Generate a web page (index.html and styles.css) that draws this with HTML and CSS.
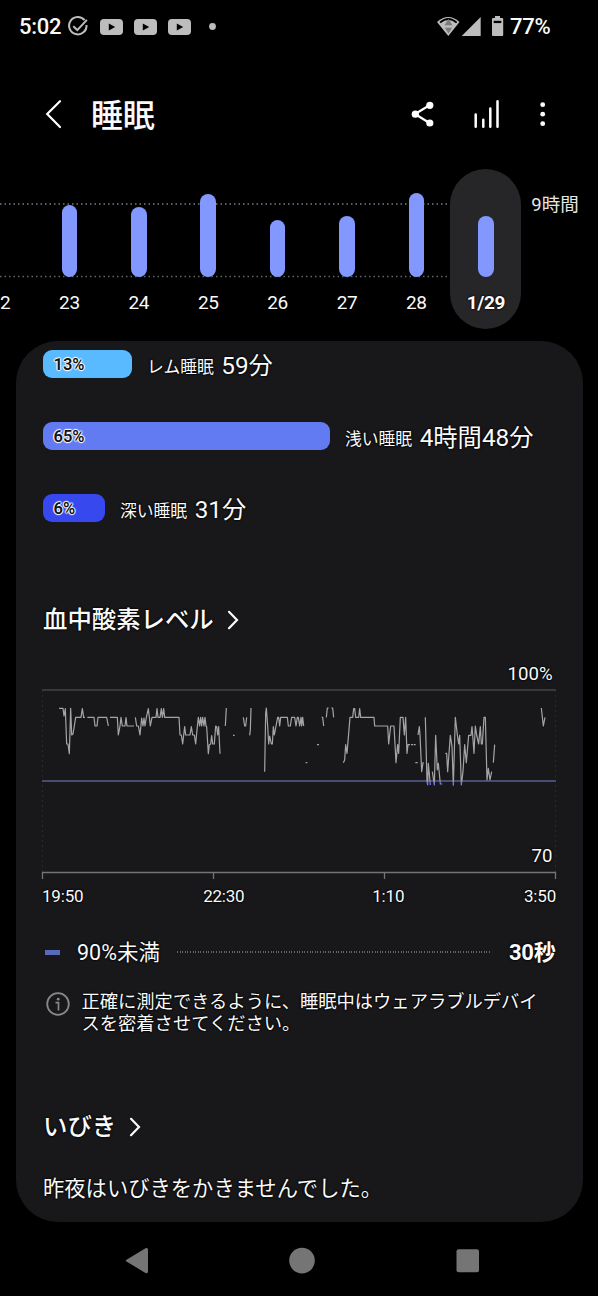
FILE: index.html
```html
<!DOCTYPE html>
<html lang="ja">
<head>
<meta charset="utf-8">
<title>睡眠</title>
<link rel="stylesheet" href="styles.css">
</head>
<body>
<div class="screen">
  <div class="status">
    <span class="clock">5:02</span>
    <svg class="status-left" width="160" height="24" viewBox="66 15 160 24">
      <g fill="none" stroke="#bdbdbd" stroke-width="2">
        <path d="M84.6 20.2A8.7 8.7 0 1 0 86.5 25"/>
        <path d="M73.3 26.3l4 3.8 9.6-10.2"/>
      </g>
      <g fill="#bdbdbd">
        <rect x="100" y="19" width="23" height="16" rx="4"/>
        <rect x="134" y="19" width="23" height="16" rx="4"/>
        <rect x="168" y="19" width="23" height="16" rx="4"/>
        <circle cx="212.5" cy="26.5" r="3.4"/>
      </g>
      <path fill="#000" d="M108.8 23.4v7l6.4-3.5zM142.8 23.4v7l6.4-3.5zM176.8 23.4v7l6.4-3.5z"/>
    </svg>
    <svg class="status-right" width="70" height="24" viewBox="435 15 70 24">
      <path fill="#bdbdbd" d="M437 22Q448.300 12 459.500 22L448.300 36z"/>
      <path fill="none" stroke="#000" stroke-width="1.800" d="M440 22.600Q448.300 15.500 456.700 22.600"/>
      <path fill="#7c7c7c" d="M448.500 19l4 6.300h-8zM448.500 33.500l-3.600-5.800h7.200z"/>
      <path fill="#bdbdbd" d="M480.700 17v19H461.700z"/>
      <path fill="#bdbdbd" d="M495 16h5v2h2.200q1 0 1 1v16q0 1-1 1H493q-1 0-1-1V19q0-1 1-1h2z"/>
      <path fill="#000" d="M493.700 20.800h7.600v2.300h-7.600z"/>
    </svg>
    <span class="battery">77%</span>
  </div>

  <div class="appbar">
    <svg class="back" width="18" height="30" viewBox="45 99 18 30"><path d="M60 101.200L47.200 114 60 127" fill="none" stroke="#fff" stroke-width="2.200" stroke-linecap="round"/></svg>
    <h1 class="title">睡眠</h1>
    <svg class="actions" width="140" height="34" viewBox="410 97 140 34" fill="#fff">
      <path d="M429.500 105.300L415 114l14.500 9" fill="none" stroke="#fff" stroke-width="2.200"/>
      <circle cx="429.800" cy="105.300" r="3.600"/><circle cx="415.300" cy="114.200" r="3.600"/><circle cx="429.800" cy="123" r="3.600"/>
      <path d="M475.700 114.500v12.200M483.300 119.800v6.900M490.300 108.500v18.200M497.500 101.200v25.500" stroke="#fff" stroke-width="2.500" stroke-linecap="round"/>
      <circle cx="542.700" cy="104.700" r="2.400"/><circle cx="542.700" cy="114.200" r="2.400"/><circle cx="542.700" cy="123.700" r="2.400"/>
    </svg>
  </div>

  <div class="week">
    <svg class="guides" width="450" height="160" viewBox="0 169 450 160">
      <path d="M0 204H450" stroke="#77798e" stroke-width="1.600" stroke-dasharray="1.500 3"/>
      <path d="M0 276.500H450" stroke="#66666a" stroke-width="1.300" stroke-dasharray="1.500 3"/>
    </svg>
    <div class="days">
      <div class="day"><span class="date">22</span></div>
      <div class="day"><i class="bar" style="height:71.500px"></i><span class="date">23</span></div>
      <div class="day"><i class="bar" style="height:69.500px"></i><span class="date">24</span></div>
      <div class="day"><i class="bar" style="height:82.500px"></i><span class="date">25</span></div>
      <div class="day"><i class="bar" style="height:57px"></i><span class="date">26</span></div>
      <div class="day"><i class="bar" style="height:60.500px"></i><span class="date">27</span></div>
      <div class="day"><i class="bar" style="height:83.500px"></i><span class="date">28</span></div>
      <div class="day selected"><i class="bar" style="height:61px"></i><span class="date">1/29</span></div>
    </div>
    <span class="goal">9時間</span>
  </div>

  <main class="card">
    <div class="stage"><span class="share rem">13%</span><span class="name">レム睡眠</span><span class="time">59分</span></div>
    <div class="stage"><span class="share light">65%</span><span class="name">浅い睡眠</span><span class="time">4時間48分</span></div>
    <div class="stage"><span class="share deep">6%</span><span class="name">深い睡眠</span><span class="time">31分</span></div>

    <h2 class="heading oxygen">血中酸素レベル<svg class="chevron" width="12" height="20" viewBox="0 0 12 20"><path d="M2 1.800L10 10 2 18.200"/></svg></h2>
    <div class="plot">
      <div class="max">100%</div>
      <svg class="trace" width="516" height="196" viewBox="41 686 516 196">
        <defs>
          <linearGradient id="below" gradientUnits="userSpaceOnUse" x1="0" y1="0" x2="0" y2="400">
            <stop offset=".757" stop-color="#a4a4a4"/><stop offset=".757" stop-color="#7280ed"/>
          </linearGradient>
        </defs>
        <path d="M42.500 690V872M555.500 690V872" stroke="#29292b" stroke-dasharray="2 3"/>
        <path d="M42 690H556" stroke="#38383a" stroke-width="2"/>
        <path d="M42 781H556" stroke="#484b73" stroke-width="2"/>
        <path d="M42.500 879V872.500H555.500V879M213.500 872v7M384.500 872v7" fill="none" stroke="#747476" stroke-width="1.300"/>
        <g fill="none" stroke="url(#below)" stroke-width="3.600" stroke-linejoin="round">
          <path transform="translate(30 680) scale(.33333)" d="M87 85H99L102 108 106 86 110 192H114L118 221 122 85 125 165 129 162 133 138 137 112H153L157 86 161 112H165M172 112H192L195 138H201L204 112H230L235 138M240 112H262L265 165 270 138 273 112 277 138H285L288 113 291 138H312M316 112L320 138H325L330 165 335 114 339 138 342 114 345 138 349 112 355 86 361 138 366 112H378L381 86 384 112H390L394 86 397 112 401 86 404 112H447L450 165H454L458 192 464 140 467 165H480L484 140 488 165H493L497 192 502 140 505 112 509 138 512 112 515 138 518 112 522 138 525 112 528 138"/>
          <path transform="translate(200 680) scale(.33333)" d="M17 138L20 140 25 221 28 194 32 192 35 167 38 192H43L47 138 50 140 53 165 56 140 60 221M76 138L79 84M99 166h5M130 112L134 138H137L140 112M149 166L151 150 153 84M194 275L197 100 199 84 203 138 206 192 209 168 214 192H217L220 140 223 165 228 138 233 112H236L239 138 242 112H262L265 138H271L275 112H284L288 138 292 112H295L299 138 303 112 305 138 308 112 311 138M317 248h5M351 194h6M365 112H368L371 138M379 112L382 84H386M394 84H398L401 112"/>
          <path transform="translate(330 680) scale(.33333)" d="M40 248L44 240 47 194 51 220 60 112H68L71 86H74L77 112H86L89 86 92 112H132L134 138H173L176 192 182 138H192L198 248 203 194 206 220 211 112H219L223 165 227 112 231 220 234 194H240M243 194h6M251 194h6M256 248h7M264 165L268 140 270 165 275 275 279 248 281 250M286 112L291 305 293 315 295 250 301 315M307 275L313 315 317 166 322 270 325 250 331 312H337M346 220H350L353 275 361 166 366 200 370 316 376 112 382 165 386 192 389 166 394 315 399 275 404 194 409 248 416 166H423L426 140 428 165 432 220 436 138 440 165 446 192 451 140 454 192H457L462 112H466L471 300 475 265 480 300 485 275M490 248L494 194M634 84L640 138 645 112"/>
        </g>
      </svg>
      <span class="min">70</span>
      <div class="hours"><span>19:50</span><span>22:30</span><span>1:10</span><span>3:50</span></div>
    </div>

    <div class="legend"><i class="key"></i><span class="under">90%未満</span><i class="leader"></i><b class="total">30秒</b></div>
    <div class="note">
      <svg class="info" width="26" height="26" viewBox="0 0 26 26"><circle cx="13" cy="13" r="10.800" fill="none" stroke="#88888a" stroke-width="1.800"/><path d="M10.500 11.700h3v7.800" fill="none" stroke="#88888a" stroke-width="1.700"/><circle cx="13.200" cy="8.200" r="1.400" fill="#88888a"/></svg>
      <p class="note-text">正確に測定できるように、睡眠中はウェアラブルデバイ<br>スを密着させてください。</p>
    </div>

    <h2 class="heading snore">いびき<svg class="chevron" width="12" height="20" viewBox="0 0 12 20"><path d="M2 1.800L10 10 2 18.200"/></svg></h2>
    <p class="result">昨夜はいびきをかきませんでした。</p>
  </main>

  <nav class="nav">
    <svg width="24" height="28" viewBox="0 0 24 28"><path d="M1.500 12.800L20.500 1.200Q23 .3 23 2.500V24.500Q23 27 20.500 26L1.500 14.600Q0 13.700 1.500 12.800z"/></svg>
    <svg width="26" height="28" viewBox="0 0 26 28"><circle cx="13" cy="13.600" r="12.800"/></svg>
    <svg width="24" height="28" viewBox="0 0 24 28"><rect x=".5" y="2.300" width="22.500" height="23" rx="2"/></svg>
  </nav>
</div>
</body>
</html>
```
FILE: styles.css
```css
* { box-sizing: border-box; }
body { margin: 0; background: #000; }
h1, h2, p { margin: 0; font-weight: 500; }
svg { display: block; flex: none; }
span, b, p, h1, h2 { white-space: nowrap; }
.screen {
  width: 598px; height: 1296px; overflow: hidden;
  display: flex; flex-direction: column;
  background: #000; color: #fafafa;
  font-family: Roboto, "Noto Sans CJK JP", sans-serif;
}
.status { height: 53px; padding: 0 48px 0 19px; display: flex; align-items: center; }
.clock, .battery { font-size: 22px; font-weight: 500; line-height: 24px; }
.clock { width: 47px; letter-spacing: -.3px; }
.status-left { margin-right: auto; }
.battery { width: 40px; margin-left: 5px; letter-spacing: -.2px; }

.appbar { height: 122px; margin-bottom: -6px; padding: 0 48px 0 45px; display: flex; align-items: center; }
.title { margin-left: 28px; padding-top: 3px; font-size: 32px; line-height: 40px; letter-spacing: -.3px; }
.actions { margin-left: auto; }

.week { position: relative; height: 160px; display: flex; align-items: flex-start; }
.guides { position: absolute; left: 0; top: 0; }
.days { position: relative; display: flex; margin-left: -34.700px; flex: none; }
.day {
  width: 69.400px; height: 160px; padding-bottom: 14px;
  display: flex; flex-direction: column; align-items: center; justify-content: flex-end;
}
.selected { width: 71px; border-radius: 36px; background: #262628; margin-left: -.7px; }
.bar { width: 15.500px; border-radius: 8px; background: #8298ff; }
.date { margin-top: 13.500px; font-size: 19px; line-height: 25px; letter-spacing: -.4px; }
.selected .date { font-weight: 700; text-shadow: 0 0 2px #000, 0 0 2px #000; }
.goal { margin: 24px 0 0 10px; font-size: 18.500px; line-height: 24px; color: #e6e6e6; }

.card {
  width: 566.500px; height: 881px; margin: 12px 0 0 16px; padding: 9px 27px 0;
  border-radius: 42px; background: #18181a; flex: none;
  text-shadow: 0 0 2px #000, 0 0 2px #000, 0 0 1px #000;
}
.stage { height: 28px; margin-bottom: 44px; display: flex; align-items: center; }
.share {
  height: 28px; padding-left: 10.500px; border-radius: 9px;
  font-size: 16.500px; line-height: 29px; font-weight: 600; color: #111;
  text-shadow: 0 0 1px #fff, 1px 0 1px #fff, -1px 0 1px #fff, 0 1px 1px #fff, 0 -1px 1px #fff, 0 0 2px #fff;
}
.rem { width: 89px; background: #5abaff; }
.light { width: 287px; background: #627af2; }
.deep { width: 62px; background: #3648ee; }
.name { margin-left: 15px; font-size: 16.800px; line-height: 24px; padding-top: 5px; }
.time { margin-left: 7.500px; font-size: 24.300px; line-height: 32px; padding-top: 4px; }

.heading { display: flex; align-items: center; font-size: 24.400px; line-height: 36px; }
.chevron { margin-left: 13px; }
.chevron path { fill: none; stroke: #fafafa; stroke-width: 2.200; stroke-linecap: round; }
.oxygen { margin-top: 80px; }
.plot { position: relative; margin: 25px -2px 0; }
.max { height: 23px; padding-right: 5px; text-align: right; font-size: 18.600px; line-height: 23px; }
.trace { width: 516px; }
.min { position: absolute; right: 5px; top: 182px; font-size: 18.600px; line-height: 23px; }
.hours { margin: 4px 1px 0; width: 514px; display: flex; justify-content: space-between; font-size: 17px; line-height: 21px; letter-spacing: -.2px; }
.hours span:nth-child(3) { margin-left: 8px; }

.legend { height: 32px; margin: 29px 0 0 2px; display: flex; align-items: center; }
.key { width: 15px; height: 5px; background: #5969bd; }
.under { margin-left: 17px; width: 100px; font-size: 21.500px; line-height: 32px; padding-top: 2px; }
.leader { width: 315px; height: 1.500px; background: repeating-linear-gradient(90deg, #666 0 1px, transparent 1px 2.600px); }
.total { margin-left: 17px; padding-top: 2px; font-size: 22px; font-weight: 700; line-height: 32px; letter-spacing: -.3px; }
.note { display: flex; margin: 23px 0 0 2px; }
.note-text { margin-left: 10.500px; font-size: 18.300px; line-height: 22px; font-weight: 400; }
.snore { margin-top: 74px; }
.result { margin-top: 28px; font-size: 21.300px; line-height: 32px; font-weight: 400; }

.nav { margin-top: 25px; padding: 0 118.500px 0 125px; display: flex; justify-content: space-between; fill: #757575; }
```
